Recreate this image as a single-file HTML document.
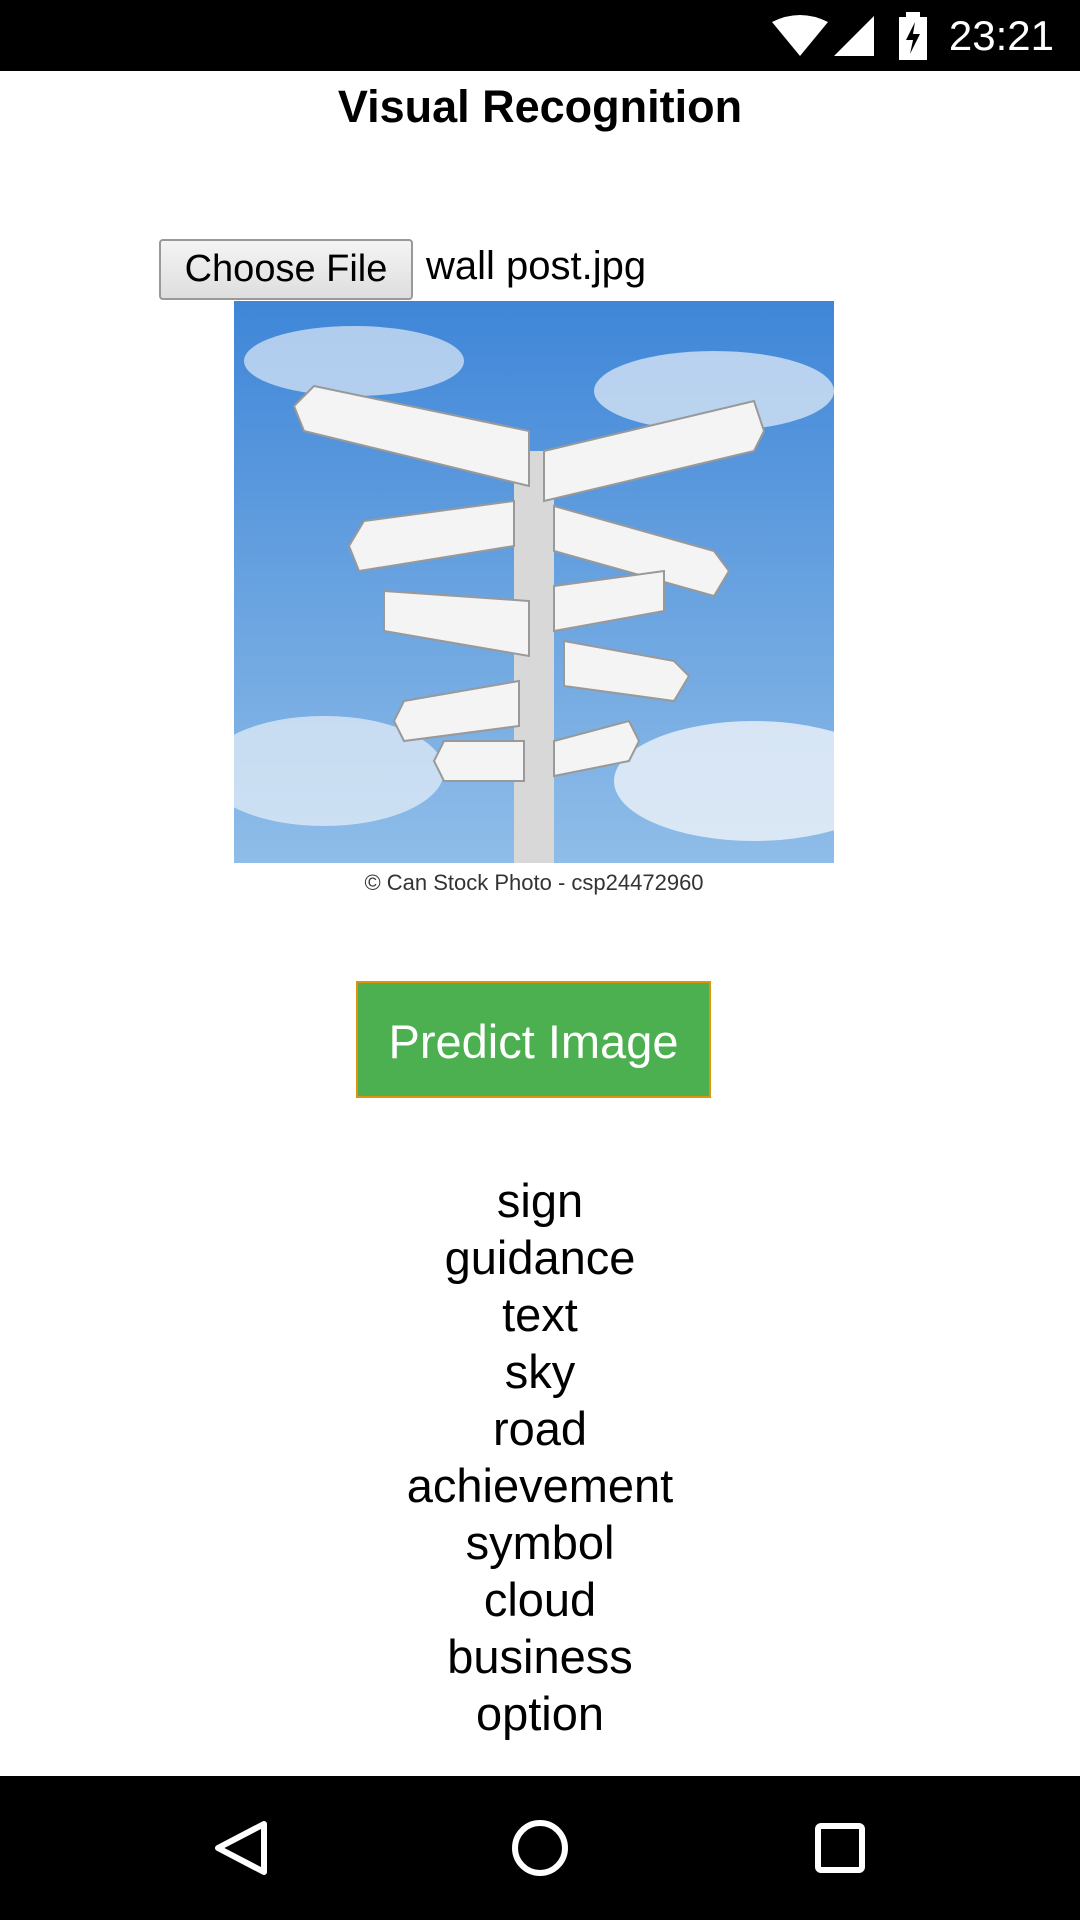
<!DOCTYPE html>
<html><head><meta charset="utf-8"><style>
*{margin:0;padding:0;box-sizing:border-box}
body{width:1080px;height:1920px;background:#fff;font-family:"Liberation Sans",sans-serif;position:relative;overflow:hidden}
.status{position:absolute;left:0;top:0;width:1080px;height:71px;background:#000;color:#fff}
.time{position:absolute;right:26px;top:12px;font-size:42px}
.title{position:absolute;top:81px;width:1080px;text-align:center;font-weight:bold;font-size:45px}
.choose{position:absolute;left:159px;top:239px;width:254px;height:61px;border:2px solid #999;border-radius:4px;background:linear-gradient(#f4f4f4,#dedede);font-size:38px;text-align:center;line-height:56px}
.fname{position:absolute;left:426px;top:244px;font-size:40px}
.img{position:absolute;left:234px;top:301px;width:600px;height:599px}
.btn{position:absolute;left:356px;top:981px;width:355px;height:117px;background:#4caf50;border:2px solid #e0940e;color:#fff;font-size:47px;text-align:center;line-height:118px}
.labels{position:absolute;top:1172px;width:1080px;text-align:center;font-size:47px;line-height:57px}
.nav{position:absolute;left:0;top:1776px;width:1080px;height:144px;background:#000}
</style></head><body>
<div class="status">
<svg style="position:absolute;left:770px;top:14px" width="110" height="44" viewBox="0 0 110 44">
<path d="M2 8 Q30 -6 58 8 L30 42 Z" fill="#fff"/>
<path d="M64 42 L104 2 L104 42 Z" fill="#fff"/>
</svg>
<svg style="position:absolute;left:898px;top:12px" width="30" height="48" viewBox="0 0 30 48">
<rect x="8" y="0" width="14" height="5" fill="#fff"/><rect x="1" y="5" width="28" height="43" fill="#fff"/>
<path d="M17 10 L8 28 L15 28 L12 42 L22 22 L15 22 Z" fill="#000"/>
</svg>
<div class="time">23:21</div>
</div>
<div class="title">Visual Recognition</div>
<div class="choose">Choose File</div>
<div class="fname">wall post.jpg</div>
<svg class="img" viewBox="0 0 600 599">
<defs><linearGradient id="s" x1="0" y1="0" x2="0" y2="1"><stop offset="0" stop-color="#3f86d8"/><stop offset="1" stop-color="#8fbde8"/></linearGradient></defs>
<rect width="600" height="562" fill="url(#s)"/>
<ellipse cx="120" cy="60" rx="110" ry="35" fill="#dfeaf6" opacity=".7"/>
<ellipse cx="480" cy="90" rx="120" ry="40" fill="#e8f0f8" opacity=".7"/>
<ellipse cx="520" cy="480" rx="140" ry="60" fill="#eef3f9" opacity=".8"/>
<ellipse cx="90" cy="470" rx="120" ry="55" fill="#e8f0f8" opacity=".7"/>
<rect x="280" y="150" width="40" height="412" fill="#d8d8d8"/>
<g fill="#f4f4f4" stroke="#999" stroke-width="2">
<polygon points="80,85 295,130 295,185 70,130 60,105"/>
<polygon points="310,150 520,100 530,130 520,150 310,200"/>
<polygon points="130,220 280,200 280,245 125,270 115,245"/>
<polygon points="320,205 480,250 495,270 480,295 320,250"/>
<polygon points="150,290 295,300 295,355 150,330"/>
<polygon points="320,285 430,270 430,310 320,330"/>
<polygon points="330,340 440,360 455,375 440,400 330,385"/>
<polygon points="170,400 285,380 285,425 170,440 160,420"/>
<polygon points="210,440 290,440 290,480 210,480 200,460"/>
<polygon points="320,440 395,420 405,440 395,460 320,475"/>
</g>
<rect x="0" y="562" width="600" height="37" fill="#fff"/>
<text x="300" y="589" font-size="22" text-anchor="middle" fill="#333" font-family="Liberation Sans Narrow, Liberation Sans">© Can Stock Photo - csp24472960</text>
</svg>
<div class="btn">Predict Image</div>
<div class="labels">sign<br>guidance<br>text<br>sky<br>road<br>achievement<br>symbol<br>cloud<br>business<br>option</div>
<div class="nav">
<svg width="1080" height="144" viewBox="0 0 1080 144">
<path d="M264 48 L218 72 L264 96 Z" fill="none" stroke="#fff" stroke-width="6" stroke-linejoin="round"/>
<circle cx="540" cy="72" r="25" fill="none" stroke="#fff" stroke-width="6"/>
<rect x="818" y="50" width="44" height="44" rx="3" fill="none" stroke="#fff" stroke-width="6"/>
</svg>
</div>
</body></html>
